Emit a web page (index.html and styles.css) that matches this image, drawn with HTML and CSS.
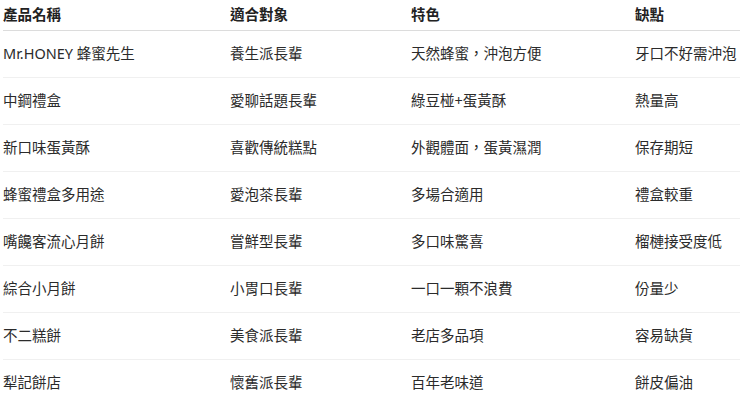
FILE: index.html
```html
<!DOCTYPE html>
<html lang="zh-Hant">
<head>
<meta charset="utf-8">
<link rel="stylesheet" href="styles.css">
</head>
<body>
<div class="wrap">
<table class="cmp">
<thead>
<tr><th class="c1">產品名稱</th><th class="c2">適合對象</th><th class="c3">特色</th><th class="c4">缺點</th></tr>
</thead>
<tbody>
<tr><td>Mr.HONEY 蜂蜜先生</td><td>養生派長輩</td><td>天然蜂蜜，沖泡方便</td><td>牙口不好需沖泡</td></tr>
<tr><td>中鋼禮盒</td><td>愛聊話題長輩</td><td>綠豆椪+蛋黃酥</td><td>熱量高</td></tr>
<tr><td>新口味蛋黃酥</td><td>喜歡傳統糕點</td><td>外觀體面，蛋黃濕潤</td><td>保存期短</td></tr>
<tr><td>蜂蜜禮盒多用途</td><td>愛泡茶長輩</td><td>多場合適用</td><td>禮盒較重</td></tr>
<tr><td>嘴饞客流心月餅</td><td>嘗鮮型長輩</td><td>多口味驚喜</td><td>榴槤接受度低</td></tr>
<tr><td>綜合小月餅</td><td>小胃口長輩</td><td>一口一顆不浪費</td><td>份量少</td></tr>
<tr><td>不二糕餅</td><td>美食派長輩</td><td>老店多品項</td><td>容易缺貨</td></tr>
<tr><td>犁記餅店</td><td>懷舊派長輩</td><td>百年老味道</td><td>餅皮偏油</td></tr>
</tbody>
</table>
</div>
</body>
</html>
```
FILE: styles.css
```css
html, body {
  margin: 0;
  padding: 0;
  background: #ffffff;
  overflow: hidden;
}
.wrap {
  padding-left: 3px;
}
.cmp {
  border-collapse: collapse;
  width: 737px;
  table-layout: fixed;
  font-family: "Noto Sans", "Noto Sans CJK TC", sans-serif;
  font-size: 14.5px;
  color: #2b2b2b;
}
.cmp th, .cmp td {
  padding: 0;
  text-align: left;
  white-space: nowrap;
  line-height: 20px;
}
.cmp th {
  font-weight: 700;
  color: #222;
  height: 27px;
  padding-bottom: 3px;
  vertical-align: middle;
  border-bottom: 1px solid #dcdcdc;
}
.cmp td {
  height: 43px;
  padding-bottom: 3px;
  border-bottom: 1px solid #f0f0f0;
}
.c1 { width: 227px; }
.c2 { width: 181px; }
.c3 { width: 224px; }
.c4 { width: 105px; }
```
